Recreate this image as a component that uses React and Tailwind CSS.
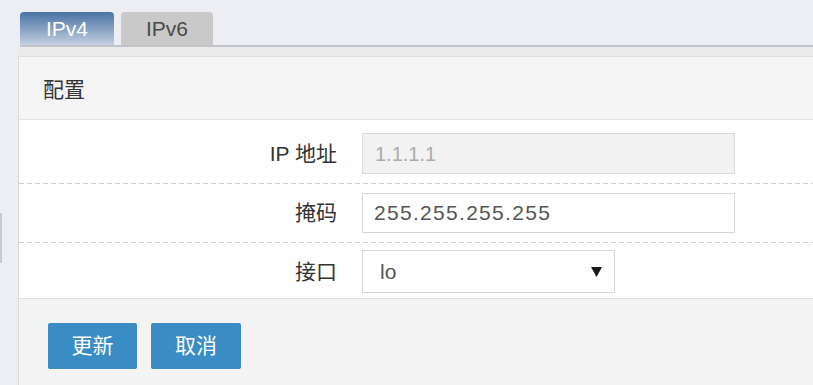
export default function App() {
  const font = { fontFamily: '"Liberation Sans", "Noto Sans CJK SC", sans-serif' };
  return (
    <div className="relative w-[813px] h-[385px] overflow-hidden bg-[#eceef4]" style={font}>
      {/* handle peeking from the left */}
      <div className="absolute left-0 top-[213px] w-[2px] h-[50px] bg-[#c9cacf]" />

      <div className="ml-[18px]">
        {/* tabs */}
        <div className="flex gap-[7px] pl-[2px] pt-[12px]">
          <div className="w-[94px] h-[33px] rounded-t-[4px] bg-gradient-to-b from-[#4a72a3] to-[#c4d0e0] flex items-center justify-center text-white text-[21px]">
            IPv4
          </div>
          <div className="w-[92px] h-[33px] rounded-t-[4px] bg-[#c9c9c9] flex items-center justify-center text-[#4a4a4a] text-[21px]">
            IPv6
          </div>
        </div>
        <div className="ml-[2px] h-[2px] bg-[#c2c3c8]" />
        <div className="h-[10px] bg-[#ebebec] border-b border-[#dfdfe1]" />

        {/* panel */}
        <div className="border-l border-[#d9d9d9]">
          <div className="h-[63px] bg-[#f5f5f5] border-b border-[#e2e2e2] flex items-center pl-[24px] pt-[3px] text-[21px] text-[#333]">
            配置
          </div>

          <div className="bg-white border-b border-[#e0e0e0]">
            <div className="flex items-center pt-[13px] pb-[9px]">
              <div className="w-[318px] text-right text-[21px] text-[#333]">IP 地址</div>
              <div className="ml-[25px] w-[373px] h-[41px] bg-[#f2f2f2] border border-[#dadada] flex items-center pl-[12px] text-[20px] text-[#ababab]">
                1.1.1.1
              </div>
            </div>
            <div className="h-px bg-[repeating-linear-gradient(90deg,#cdcdcd_0_5px,transparent_5px_8px)]" />
            <div className="flex items-center pt-[9px] pb-[9px]">
              <div className="w-[318px] text-right text-[21px] text-[#333]">掩码</div>
              <div className="ml-[25px] w-[373px] h-[40px] bg-white border border-[#d6d6d6] flex items-center pl-[11px] text-[21px] tracking-[1.3px] text-[#555]">
                255.255.255.255
              </div>
            </div>
            <div className="h-px bg-[repeating-linear-gradient(90deg,#cdcdcd_0_5px,transparent_5px_8px)]" />
            <div className="flex items-center pt-[7px] pb-[5px]">
              <div className="w-[318px] text-right text-[21px] text-[#333]">接口</div>
              <div className="ml-[25px] w-[253px] h-[43px] bg-white border border-[#d6d6d6] flex items-center justify-between pl-[17px] pr-[12px] text-[21px] text-[#555]">
                <span>lo</span>
                <svg width="11" height="10" viewBox="0 0 11 10">
                  <polygon points="0,0 11,0 5.5,10" fill="#1a1a1a" />
                </svg>
              </div>
            </div>
          </div>

          <div className="h-[90px] bg-[#f4f4f4] flex items-start gap-[14px] pl-[29px] pt-[24px]">
            <button className="w-[89px] h-[46px] rounded-[2px] bg-[#3a8cc4] text-white text-[21px]">更新</button>
            <button className="w-[90px] h-[46px] rounded-[2px] bg-[#3a8cc4] text-white text-[21px]">取消</button>
          </div>
        </div>
      </div>
    </div>
  );
}
